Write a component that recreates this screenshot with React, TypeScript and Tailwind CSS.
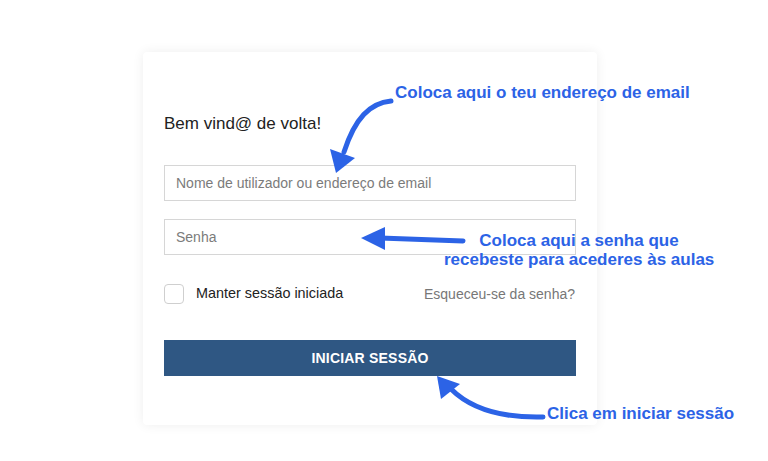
export default function App() {
  return (
    <div
      className="relative w-[768px] h-[461px] overflow-hidden bg-white"
      style={{ fontFamily: '"Liberation Sans", Arial, sans-serif' }}
    >
      <div className="pt-[52px] pl-[143px]">
        <div className="w-[454px] rounded bg-white shadow-[0_0_12px_rgba(0,0,0,0.07)] px-[21px] pt-[61px] pb-[49px]">
          <h1 className="text-[17px] leading-[22px] text-[#222]">Bem vind@ de volta!</h1>

          <input
            type="text"
            placeholder="Nome de utilizador ou endereço de email"
            className="mt-[30px] block w-full h-[36px] border border-[#d6d6d6] px-[11px] text-[14px] text-[#333] placeholder:text-[#7b7b7b] outline-none"
          />
          <input
            type="password"
            placeholder="Senha"
            className="mt-[18px] block w-full h-[36px] border border-[#d6d6d6] px-[11px] text-[14px] text-[#333] placeholder:text-[#7b7b7b] outline-none"
          />

          <div className="mt-[29px] flex items-center justify-between h-[20px]">
            <label className="flex items-center gap-[12px] text-[14.4px] text-[#222]">
              <span className="w-[20px] h-[20px] rounded-[4px] border border-[#cfcfcf] bg-white" />
              Manter sessão iniciada
            </label>
            <a className="text-[14px] text-[#777] pr-[1px]">Esqueceu-se da senha?</a>
          </div>

          <button className="mt-[36px] w-full h-[36px] bg-[#2f5783] text-white text-[14px] font-bold tracking-[0.2px]">
            INICIAR SESSÃO
          </button>
        </div>
      </div>

      {/* annotations */}
      <svg className="absolute left-0 top-0 pointer-events-none" width="768" height="461">
        <g fill="none" stroke="#2c63e6" strokeWidth="5" strokeLinecap="round">
          <path d="M391 101 C 370 103, 355 118, 344 152" />
          <path d="M463 241 L 380 238" />
          <path d="M543 417 C 505 418, 472 410, 451 389" />
        </g>
        <g fill="#2c63e6">
          <polygon points="336,173 330,149 355,158" />
          <polygon points="361,238 385,227 385,250" />
          <polygon points="437,376 441,399 460,384" />
        </g>
      </svg>

      <div className="absolute left-[395px] top-[83px] text-[17px] leading-[20px] font-bold text-[#2c63e6] whitespace-nowrap">
        Coloca aqui o teu endereço de email
      </div>
      <div className="absolute left-[444px] top-[231px] w-[270px] text-center text-[17px] leading-[19px] font-bold text-[#2c63e6] whitespace-nowrap">
        Coloca aqui a senha que
        <br />
        recebeste para acederes às aulas
      </div>
      <div className="absolute left-[547px] top-[404px] text-[17px] leading-[20px] font-bold text-[#2c63e6] whitespace-nowrap">
        Clica em iniciar sessão
      </div>
    </div>
  );
}
